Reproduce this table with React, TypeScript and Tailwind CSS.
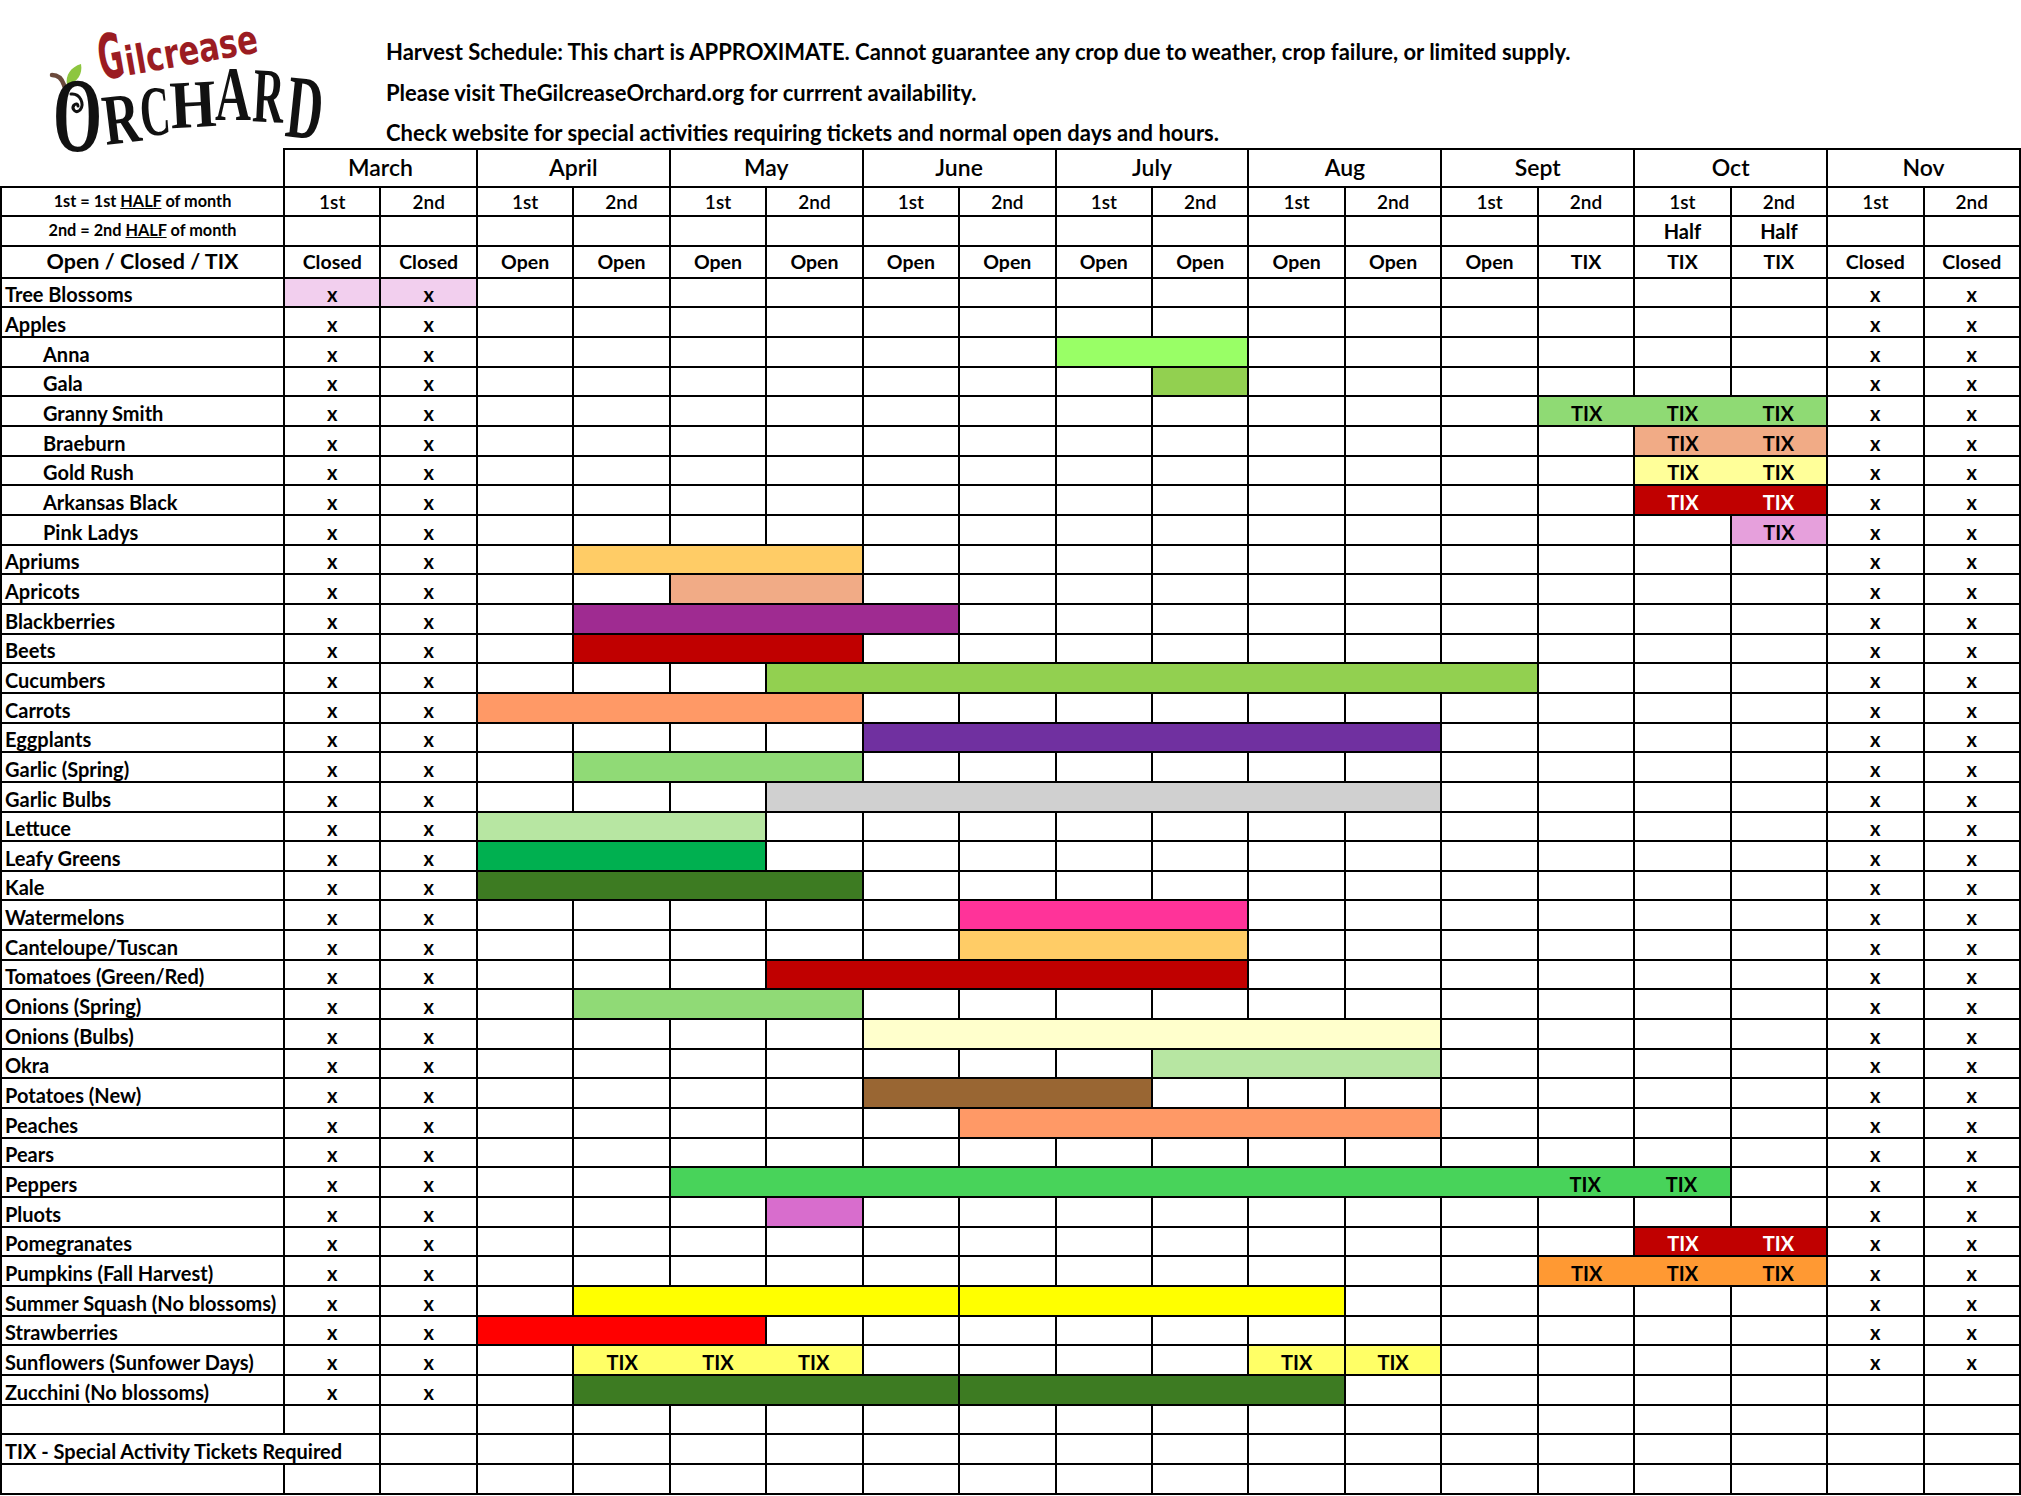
import React from 'react';

type Seg = { s: number; e: number; c: string; tix?: number[]; white?: boolean };
type Row = { label: string; indent?: boolean; nov?: boolean; marBg?: string; segs: Seg[] };

const SPAN = ['', 'col-span-1', 'col-span-2', 'col-span-3', 'col-span-4', 'col-span-5', 'col-span-6', 'col-span-7', 'col-span-8', 'col-span-9', 'col-span-10', 'col-span-11', 'col-span-12'];
const GCOLS = ['', 'grid-cols-1', 'grid-cols-2', 'grid-cols-3', 'grid-cols-4', 'grid-cols-5', 'grid-cols-6', 'grid-cols-7', 'grid-cols-8', 'grid-cols-9', 'grid-cols-10', 'grid-cols-11', 'grid-cols-12'];

const range = (a: number, b: number) => Array.from({ length: b - a + 1 }, (_, i) => a + i);

const rows: Row[] = [
  { label: 'Tree Blossoms', nov: true, marBg: 'bg-[#f2cfee]', segs: [] },
  { label: 'Apples', nov: true, segs: [] },
  { label: 'Anna', indent: true, nov: true, segs: [{ s: 8, e: 9, c: 'bg-[#99ff66]' }] },
  { label: 'Gala', indent: true, nov: true, segs: [{ s: 9, e: 9, c: 'bg-[#92d050]' }] },
  { label: 'Granny Smith', indent: true, nov: true, segs: [{ s: 13, e: 15, c: 'bg-[#8fda74]', tix: [13, 14, 15] }] },
  { label: 'Braeburn', indent: true, nov: true, segs: [{ s: 14, e: 15, c: 'bg-[#f1ab86]', tix: [14, 15] }] },
  { label: 'Gold Rush', indent: true, nov: true, segs: [{ s: 14, e: 15, c: 'bg-[#ffff99]', tix: [14, 15] }] },
  { label: 'Arkansas Black', indent: true, nov: true, segs: [{ s: 14, e: 15, c: 'bg-[#c00000]', tix: [14, 15], white: true }] },
  { label: 'Pink Ladys', indent: true, nov: true, segs: [{ s: 15, e: 15, c: 'bg-[#e6a0dc]', tix: [15] }] },
  { label: 'Apriums', nov: true, segs: [{ s: 3, e: 5, c: 'bg-[#ffcc66]' }] },
  { label: 'Apricots', nov: true, segs: [{ s: 4, e: 5, c: 'bg-[#f1ab86]' }] },
  { label: 'Blackberries', nov: true, segs: [{ s: 3, e: 6, c: 'bg-[#9f2b91]' }] },
  { label: 'Beets', nov: true, segs: [{ s: 3, e: 5, c: 'bg-[#c00000]' }] },
  { label: 'Cucumbers', nov: true, segs: [{ s: 5, e: 12, c: 'bg-[#92d050]' }] },
  { label: 'Carrots', nov: true, segs: [{ s: 2, e: 5, c: 'bg-[#ff9966]' }] },
  { label: 'Eggplants', nov: true, segs: [{ s: 6, e: 11, c: 'bg-[#7030a0]' }] },
  { label: 'Garlic (Spring)', nov: true, segs: [{ s: 3, e: 5, c: 'bg-[#90da76]' }] },
  { label: 'Garlic Bulbs', nov: true, segs: [{ s: 5, e: 11, c: 'bg-[#d0d0d0]' }] },
  { label: 'Lettuce', nov: true, segs: [{ s: 2, e: 4, c: 'bg-[#b7e6a2]' }] },
  { label: 'Leafy Greens', nov: true, segs: [{ s: 2, e: 4, c: 'bg-[#00b050]' }] },
  { label: 'Kale', nov: true, segs: [{ s: 2, e: 5, c: 'bg-[#3d7b22]' }] },
  { label: 'Watermelons', nov: true, segs: [{ s: 7, e: 9, c: 'bg-[#ff3399]' }] },
  { label: 'Canteloupe/Tuscan', nov: true, segs: [{ s: 7, e: 9, c: 'bg-[#ffcc66]' }] },
  { label: 'Tomatoes (Green/Red)', nov: true, segs: [{ s: 5, e: 9, c: 'bg-[#c00000]' }] },
  { label: 'Onions (Spring)', nov: true, segs: [{ s: 3, e: 5, c: 'bg-[#90da76]' }] },
  { label: 'Onions (Bulbs)', nov: true, segs: [{ s: 6, e: 11, c: 'bg-[#ffffcc]' }] },
  { label: 'Okra', nov: true, segs: [{ s: 9, e: 11, c: 'bg-[#b7e6a2]' }] },
  { label: 'Potatoes (New)', nov: true, segs: [{ s: 6, e: 8, c: 'bg-[#996633]' }] },
  { label: 'Peaches', nov: true, segs: [{ s: 7, e: 11, c: 'bg-[#ff9966]' }] },
  { label: 'Pears', nov: true, segs: [] },
  { label: 'Peppers', nov: true, segs: [{ s: 4, e: 14, c: 'bg-[#48d35a]', tix: [13, 14] }] },
  { label: 'Pluots', nov: true, segs: [{ s: 5, e: 5, c: 'bg-[#d86dcd]' }] },
  { label: 'Pomegranates', nov: true, segs: [{ s: 14, e: 15, c: 'bg-[#c00000]', tix: [14, 15], white: true }] },
  { label: 'Pumpkins (Fall Harvest)', nov: true, segs: [{ s: 13, e: 15, c: 'bg-[#ff9933]', tix: [13, 14, 15] }] },
  {
    label: 'Summer Squash (No blossoms)',
    nov: true,
    segs: [
      { s: 3, e: 6, c: 'bg-[#ffff00]' },
      { s: 7, e: 10, c: 'bg-[#ffff00]' },
    ],
  },
  { label: 'Strawberries', nov: true, segs: [{ s: 2, e: 4, c: 'bg-[#ff0000]' }] },
  {
    label: 'Sunflowers (Sunfower Days)',
    nov: true,
    segs: [
      { s: 3, e: 5, c: 'bg-[#ffff66]', tix: [3, 4, 5] },
      { s: 10, e: 10, c: 'bg-[#ffff66]', tix: [10] },
      { s: 11, e: 11, c: 'bg-[#ffff66]', tix: [11] },
    ],
  },
  {
    label: 'Zucchini (No blossoms)',
    nov: false,
    segs: [
      { s: 3, e: 6, c: 'bg-[#3d7b22]' },
      { s: 7, e: 10, c: 'bg-[#3d7b22]' },
    ],
  },
];

const CELL = 'border-r-2 border-b-2 border-black';
const DATA_TXT = 'flex items-end justify-center pb-[2px] text-[20px] font-bold leading-none whitespace-nowrap';

function DataRow({ row }: { row: Row }) {
  const cells: React.ReactNode[] = [];
  cells.push(
    <div
      key="l"
      className={`border-l-2 ${CELL} flex items-end pb-[2px] text-[20px] font-bold leading-none whitespace-nowrap ${row.indent ? 'pl-[41px]' : 'pl-[3px]'}`}
    >
      {row.label}
    </div>
  );
  let i = 0;
  while (i < 18) {
    const seg = row.segs.find((s) => s.s === i);
    if (seg) {
      const n = seg.e - seg.s + 1;
      cells.push(
        <div key={`s${i}`} className={`${SPAN[n]} ${CELL} ${seg.c} grid ${GCOLS[n]}`}>
          {range(seg.s, seg.e).map((k) => (
            <div key={k} className={`${DATA_TXT} ${seg.white ? 'text-white' : 'text-black'}`}>
              {seg.tix && seg.tix.includes(k) ? 'TIX' : ''}
            </div>
          ))}
        </div>
      );
      i = seg.e + 1;
    } else {
      const x = i <= 1 || (i >= 16 && row.nov);
      const bg = i <= 1 && row.marBg ? row.marBg : '';
      cells.push(
        <div key={`c${i}`} className={`${CELL} ${bg} ${DATA_TXT}`}>
          {x ? 'x' : ''}
        </div>
      );
      i++;
    }
  }
  return <>{cells}</>;
}

function EmptyRow({ k }: { k: string }) {
  return (
    <>
      <div className={`border-l-2 ${CELL}`} />
      {range(0, 17).map((i) => (
        <div key={`${k}${i}`} className={CELL} />
      ))}
    </>
  );
}

const MONTHS = ['March', 'April', 'May', 'June', 'July', 'Aug', 'Sept', 'Oct', 'Nov'];
const STATUS = ['Closed', 'Closed', 'Open', 'Open', 'Open', 'Open', 'Open', 'Open', 'Open', 'Open', 'Open', 'Open', 'Open', 'TIX', 'TIX', 'TIX', 'Closed', 'Closed'];

function Logo() {
  return (
    <svg width="340" height="170" viewBox="0 0 340 170" className="overflow-visible block">
      <path d="M52 75 C58 75 62 79 64 85 L66 91" stroke="#6b4a3c" strokeWidth="4.5" fill="none" strokeLinecap="round" />
      <path d="M67 85 C65 75 71 67 81 64 C83 74 77 83 67 85 Z" fill="#8dc63f" />
      <g transform="rotate(-10 102 80)" fill="#9b1c22" fontFamily="'DejaVu Sans', sans-serif" fontWeight="bold">
        <text x="102" y="80" fontSize="62" textLength="25" lengthAdjust="spacingAndGlyphs">G</text>
        <text x="128" y="80" fontSize="40" textLength="134" lengthAdjust="spacingAndGlyphs">ilcrease</text>
      </g>
      <g fill="#111111" fontFamily="'Liberation Serif', serif" fontWeight="bold">
        <text x="53" y="151" fontSize="106" textLength="49" lengthAdjust="spacingAndGlyphs">O</text>
        <g transform="rotate(-7 121 120)">
          <text x="103" y="143" fontSize="72" textLength="37" lengthAdjust="spacingAndGlyphs">R</text>
        </g>
        <g transform="rotate(-5 155 112)">
          <text x="140" y="135" fontSize="71" textLength="30" lengthAdjust="spacingAndGlyphs">C</text>
        </g>
        <g transform="rotate(-3 193 105)">
          <text x="170" y="127" fontSize="68" textLength="46" lengthAdjust="spacingAndGlyphs">H</text>
        </g>
        <text x="215" y="120" fontSize="79" textLength="36" lengthAdjust="spacingAndGlyphs">A</text>
        <g transform="rotate(3 268 96)">
          <text x="253" y="122" fontSize="78" textLength="31" lengthAdjust="spacingAndGlyphs">R</text>
        </g>
        <g transform="rotate(6 305 108)">
          <text x="287" y="138" fontSize="90" textLength="36" lengthAdjust="spacingAndGlyphs">D</text>
        </g>
      </g>
      <path d="M71 94 C80 93 85 104 80 110 C76 114 71 109 74 105 C76 103 78 104 78 106" stroke="#111111" strokeWidth="3" fill="none" strokeLinecap="round" />
    </svg>
  );
}

export default function App() {
  return (
    <div className="w-[2021px] h-[1496px] bg-white overflow-hidden text-black font-[Lato,sans-serif]">
      <div className="h-[147.5px] flex">
        <div className="w-[386px] h-[147.5px] shrink-0 relative z-10">
          <Logo />
        </div>
        <div className="flex flex-col pt-[32px] text-[22px] font-bold leading-[40.5px] whitespace-nowrap">
          <div className="h-[40.5px]">Harvest Schedule: This chart is APPROXIMATE. Cannot guarantee any crop due to weather, crop failure, or limited supply.</div>
          <div className="h-[40.5px]">Please visit TheGilcreaseOrchard.org for currrent availability.</div>
          <div className="h-[40.5px]">Check website for special activities requiring tickets and normal open days and hours.</div>
        </div>
      </div>
      <div className="grid grid-cols-[285px_repeat(18,minmax(0,1fr))] grid-rows-[40.5px_29px_29.7px_32px_repeat(41,29.67px)]">
        {/* month row */}
        <div className="border-r-2 border-b-2 border-black" />
        {MONTHS.map((m) => (
          <div key={m} className="col-span-2 border-t-2 border-r-2 border-b-2 border-black flex items-center justify-center text-[23px] font-semibold leading-none">
            {m}
          </div>
        ))}
        {/* 1st / 2nd row */}
        <div className={`border-l-2 ${CELL} flex items-end justify-center pb-[6px] text-[16.3px] font-bold leading-none whitespace-nowrap`}>
          <span>
            1st = 1st <span className="underline">HALF</span> of month
          </span>
        </div>
        {range(0, 17).map((i) => (
          <div key={`h${i}`} className={`${CELL} flex items-end justify-center pb-[4.5px] text-[19px] font-semibold leading-none`}>
            {i % 2 === 0 ? '1st' : '2nd'}
          </div>
        ))}
        {/* half row */}
        <div className={`border-l-2 ${CELL} flex items-end justify-center pb-[6px] text-[16.3px] font-bold leading-none whitespace-nowrap`}>
          <span>
            2nd = 2nd <span className="underline">HALF</span> of month
          </span>
        </div>
        {range(0, 17).map((i) => (
          <div key={`f${i}`} className={`${CELL} flex items-end justify-center pb-[3.5px] text-[20px] font-bold leading-none`}>
            {i === 14 || i === 15 ? 'Half' : ''}
          </div>
        ))}
        {/* status row */}
        <div className={`border-l-2 ${CELL} flex items-end justify-center pb-[4px] text-[21.5px] font-bold leading-none whitespace-nowrap`}>
          Open / Closed / TIX
        </div>
        {STATUS.map((s, i) => (
          <div key={`st${i}`} className={`${CELL} flex items-end justify-center pb-[5px] text-[19.5px] font-bold leading-none`}>
            {s}
          </div>
        ))}
        {rows.map((r) => (
          <DataRow key={r.label} row={r} />
        ))}
        <EmptyRow k="e1" />
        <div className={`col-span-2 border-l-2 ${CELL} flex items-end pl-[3px] pb-[2px] text-[20px] font-bold leading-none whitespace-nowrap`}>
          TIX - Special Activity Tickets Required
        </div>
        {range(0, 16).map((i) => (
          <div key={`lg${i}`} className={CELL} />
        ))}
        <EmptyRow k="e2" />
      </div>
    </div>
  );
}
